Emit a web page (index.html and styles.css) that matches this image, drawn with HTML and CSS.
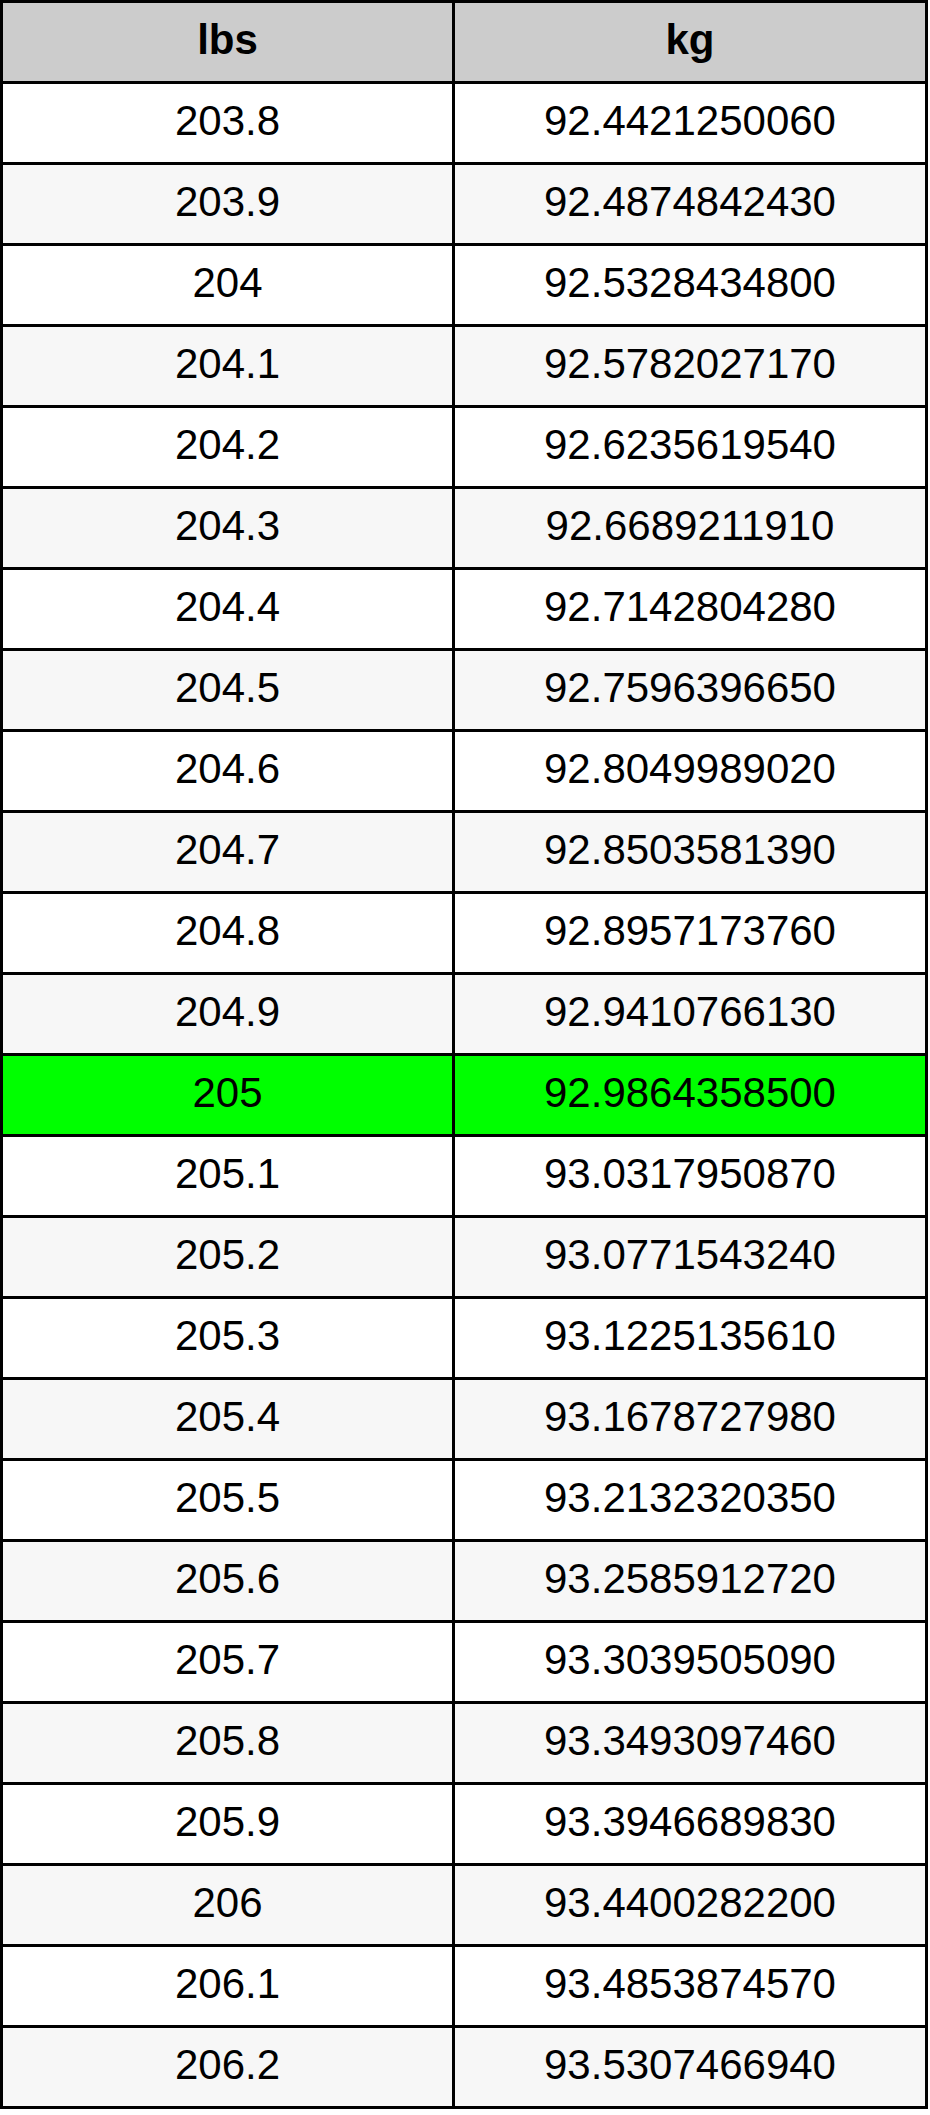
FILE: index.html
```html
<!DOCTYPE html>
<html>
<head>
<meta charset="utf-8">
<link rel="stylesheet" href="styles.css">
</head>
<body>
<table class="conv">
<thead>
<tr><th class="c-lbs">lbs</th><th class="c-kg">kg</th></tr>
</thead>
<tbody>
<tr><td>203.8</td><td>92.4421250060</td></tr>
<tr class="alt"><td>203.9</td><td>92.4874842430</td></tr>
<tr><td>204</td><td>92.5328434800</td></tr>
<tr class="alt"><td>204.1</td><td>92.5782027170</td></tr>
<tr><td>204.2</td><td>92.6235619540</td></tr>
<tr class="alt"><td>204.3</td><td>92.6689211910</td></tr>
<tr><td>204.4</td><td>92.7142804280</td></tr>
<tr class="alt"><td>204.5</td><td>92.7596396650</td></tr>
<tr><td>204.6</td><td>92.8049989020</td></tr>
<tr class="alt"><td>204.7</td><td>92.8503581390</td></tr>
<tr><td>204.8</td><td>92.8957173760</td></tr>
<tr class="alt"><td>204.9</td><td>92.9410766130</td></tr>
<tr class="hl"><td>205</td><td>92.9864358500</td></tr>
<tr><td>205.1</td><td>93.0317950870</td></tr>
<tr class="alt"><td>205.2</td><td>93.0771543240</td></tr>
<tr><td>205.3</td><td>93.1225135610</td></tr>
<tr class="alt"><td>205.4</td><td>93.1678727980</td></tr>
<tr><td>205.5</td><td>93.2132320350</td></tr>
<tr class="alt"><td>205.6</td><td>93.2585912720</td></tr>
<tr><td>205.7</td><td>93.3039505090</td></tr>
<tr class="alt"><td>205.8</td><td>93.3493097460</td></tr>
<tr><td>205.9</td><td>93.3946689830</td></tr>
<tr class="alt"><td>206</td><td>93.4400282200</td></tr>
<tr><td>206.1</td><td>93.4853874570</td></tr>
<tr class="alt"><td>206.2</td><td>93.5307466940</td></tr>
</tbody>
</table>
</body>
</html>
```
FILE: styles.css
```css
html, body {
  margin: 0;
  padding: 0;
  background: #ffffff;
}

.conv {
  border-collapse: separate;
  border-spacing: 3px;
  background: #000000;
  font-family: "Liberation Sans", Arial, sans-serif;
  font-size: 42px;
  color: #000000;
  table-layout: fixed;
}

.conv th,
.conv td {
  height: 74px;
  padding: 0 0 4px 0;
  text-align: center;
  vertical-align: middle;
  background: #ffffff;
  line-height: 1;
}

.conv th {
  background: #cccccc;
  font-weight: bold;
}

.c-lbs { width: 449px; }
.c-kg { width: 470px; }

.conv tr.alt td {
  background: #f7f7f7;
}

.conv tr.hl td {
  background: #00ff00;
}
```
